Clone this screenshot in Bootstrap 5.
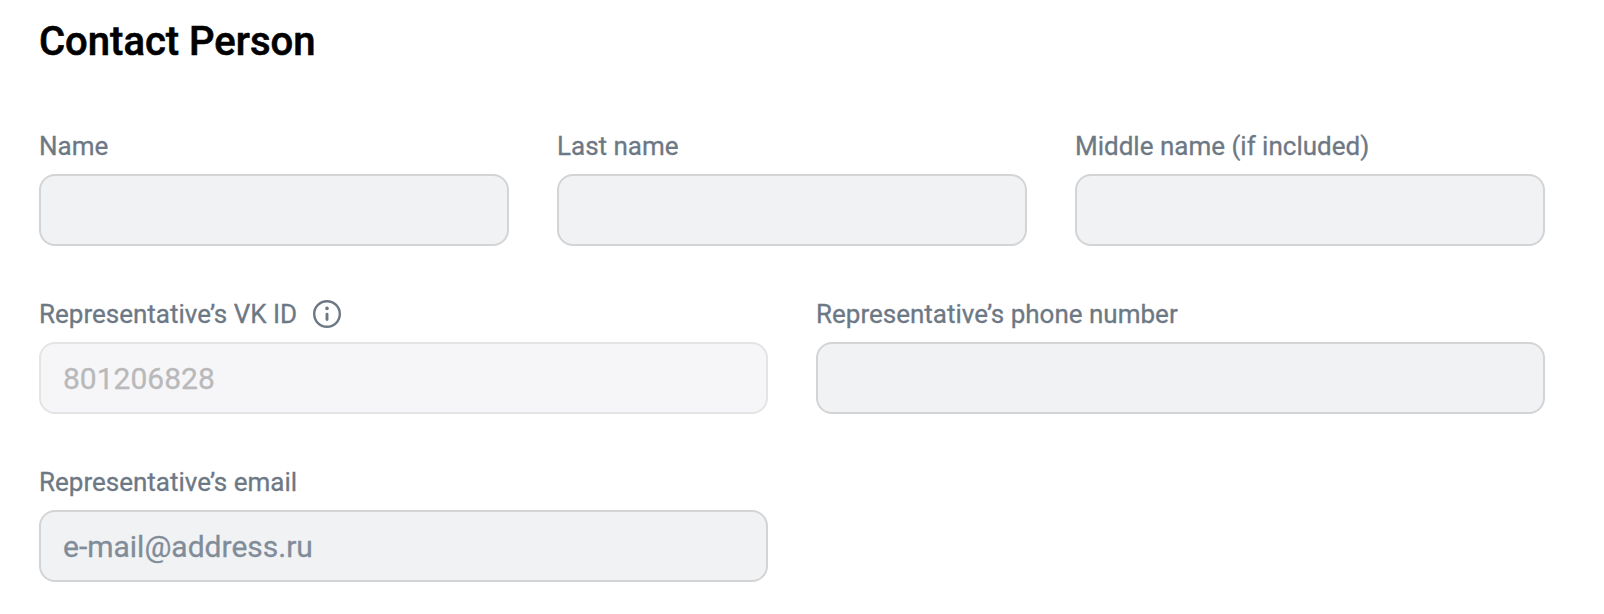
<!DOCTYPE html>
<html lang="en">
<head>
<meta charset="utf-8">
<meta name="viewport" content="width=device-width, initial-scale=1">
<title>Contact Person</title>
<link href="https://cdn.jsdelivr.net/npm/bootstrap@5.3.0/dist/css/bootstrap.min.css" rel="stylesheet">
<style>
body{font-family:Roboto,sans-serif;color:#000;background:#fff;overflow:hidden}
.contact-form{padding:20px 59px 0 39px}
.form-title{font-size:40px;line-height:44px;font-weight:500;margin:0 0 64px;-webkit-text-stroke:.6px currentColor}
.row{--bs-gutter-x:48px}
.field-row{margin-bottom:50px}
.form-label{display:flex;align-items:center;font-size:26px;line-height:36px;height:36px;color:#6d7885;margin:0 0 10px;-webkit-text-stroke:.3px currentColor}
.info-icon{margin-left:15px}
.form-control,.form-control:disabled{height:72px;border:2px solid #d3d4d6;border-radius:16px;background:#f1f2f4;padding:0 22px;font-size:30px;color:#818c99;-webkit-text-stroke:.3px currentColor}
.form-control::placeholder{color:#818c99}
.form-control:disabled{background:#f6f6f9;border-color:#e4e4e5;color:#b9b9ba;opacity:1}
</style>
</head>
<body>
<form class="contact-form">
<h1 class="form-title">Contact Person</h1>
<div class="row field-row">
<div class="col-4"><label class="form-label" for="first">Name</label><input id="first" class="form-control"></div>
<div class="col-4"><label class="form-label" for="last">Last name</label><input id="last" class="form-control"></div>
<div class="col-4"><label class="form-label" for="middle">Middle name (if included)</label><input id="middle" class="form-control"></div>
</div>
<div class="row field-row">
<div class="col-6"><label class="form-label" for="vkid">Representative’s VK ID
<svg class="info-icon" width="30" height="30" viewBox="0 0 30 30" fill="none" stroke="currentColor" stroke-width="2.4"><circle cx="15" cy="15" r="12.8"/><path d="M15 15.1v5.5" stroke-width="2.9" stroke-linecap="round"/><circle cx="15" cy="9.4" r="1.8" fill="currentColor" stroke="none"/></svg></label><input id="vkid" class="form-control" value="801206828" disabled></div>
<div class="col-6"><label class="form-label" for="phone">Representative’s phone number</label><input id="phone" class="form-control"></div>
</div>
<div class="row">
<div class="col-6"><label class="form-label" for="email">Representative’s email</label><input id="email" class="form-control" placeholder="e-mail@address.ru"></div>
</div>
</form>
<script src="https://cdn.jsdelivr.net/npm/bootstrap@5.3.0/dist/js/bootstrap.bundle.min.js"></script>
</body>
</html>
